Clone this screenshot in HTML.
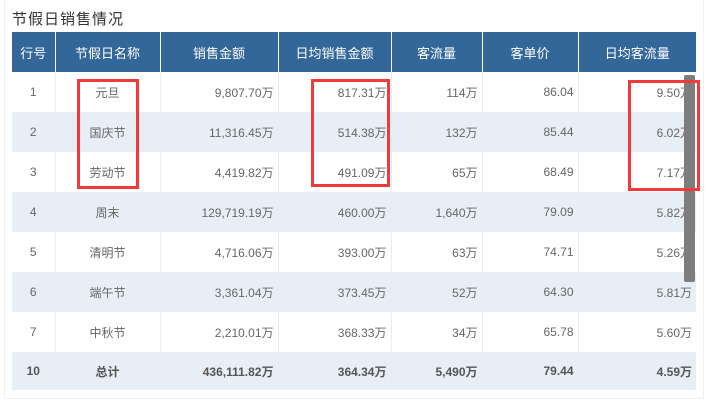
<!DOCTYPE html>
<html><head><meta charset="utf-8"><style>
body{margin:0;width:706px;height:402px;background:#fff;position:relative;overflow:hidden;font-family:"Liberation Sans","Noto Sans CJK SC",sans-serif;}
.frame{position:absolute;left:4px;top:0;width:700px;height:399px;border:1px solid #eef0f3;border-top:none;box-sizing:border-box;}
.title{position:absolute;left:12px;top:8px;font-size:15px;color:#333;letter-spacing:1px;}
table{position:absolute;left:12px;top:32px;border-collapse:collapse;table-layout:fixed;width:684px;font-size:12px;color:#666;}
th{background:#336699;color:#fff;font-weight:normal;height:40px;font-size:13px;border-left:1px solid #fff;padding:0;}
th:first-child{border-left:none}
td{height:40px;border-left:1px solid #e8ebef;padding:0 4px;text-align:right;box-sizing:border-box;}
td:first-child{border-left:none}
td.c{text-align:center}
tr:nth-child(odd) td{background:#e8eef6}
tr.tot td{background:#e8eef6;font-weight:bold;color:#555;height:38px}
.red{position:absolute;border:3px solid #f23a3a;box-sizing:border-box}
.sb{position:absolute;left:684px;top:75px;width:11px;height:207px;background:#7d7d7d;border-radius:2px}
</style></head><body>
<div class="frame"></div>
<div class="title">节假日销售情况</div>
<table>
<colgroup><col style="width:43px"><col style="width:105px"><col style="width:118px"><col style="width:113px"><col style="width:91px"><col style="width:96px"><col style="width:118px"></colgroup>
<tr><th>行号</th><th>节假日名称</th><th>销售金额</th><th>日均销售金额</th><th>客流量</th><th>客单价</th><th>日均客流量</th></tr>
<tr><td class="c">1</td><td class="c">元旦</td><td>9,807.70万</td><td>817.31万</td><td>114万</td><td>86.04</td><td>9.50万</td></tr>
<tr><td class="c">2</td><td class="c">国庆节</td><td>11,316.45万</td><td>514.38万</td><td>132万</td><td>85.44</td><td>6.02万</td></tr>
<tr><td class="c">3</td><td class="c">劳动节</td><td>4,419.82万</td><td>491.09万</td><td>65万</td><td>68.49</td><td>7.17万</td></tr>
<tr><td class="c">4</td><td class="c">周末</td><td>129,719.19万</td><td>460.00万</td><td>1,640万</td><td>79.09</td><td>5.82万</td></tr>
<tr><td class="c">5</td><td class="c">清明节</td><td>4,716.06万</td><td>393.00万</td><td>63万</td><td>74.71</td><td>5.26万</td></tr>
<tr><td class="c">6</td><td class="c">端午节</td><td>3,361.04万</td><td>373.45万</td><td>52万</td><td>64.30</td><td>5.81万</td></tr>
<tr><td class="c">7</td><td class="c">中秋节</td><td>2,210.01万</td><td>368.33万</td><td>34万</td><td>65.78</td><td>5.60万</td></tr>
<tr class="tot"><td class="c">10</td><td class="c">总计</td><td>436,111.82万</td><td>364.34万</td><td>5,490万</td><td>79.44</td><td>4.59万</td></tr>
</table>
<div class="sb"></div>
<div class="red" style="left:77px;top:79px;width:62px;height:110px"></div>
<div class="red" style="left:311px;top:79px;width:79px;height:108px"></div>
<div class="red" style="left:628px;top:80px;width:72px;height:111px"></div>
</body></html>
